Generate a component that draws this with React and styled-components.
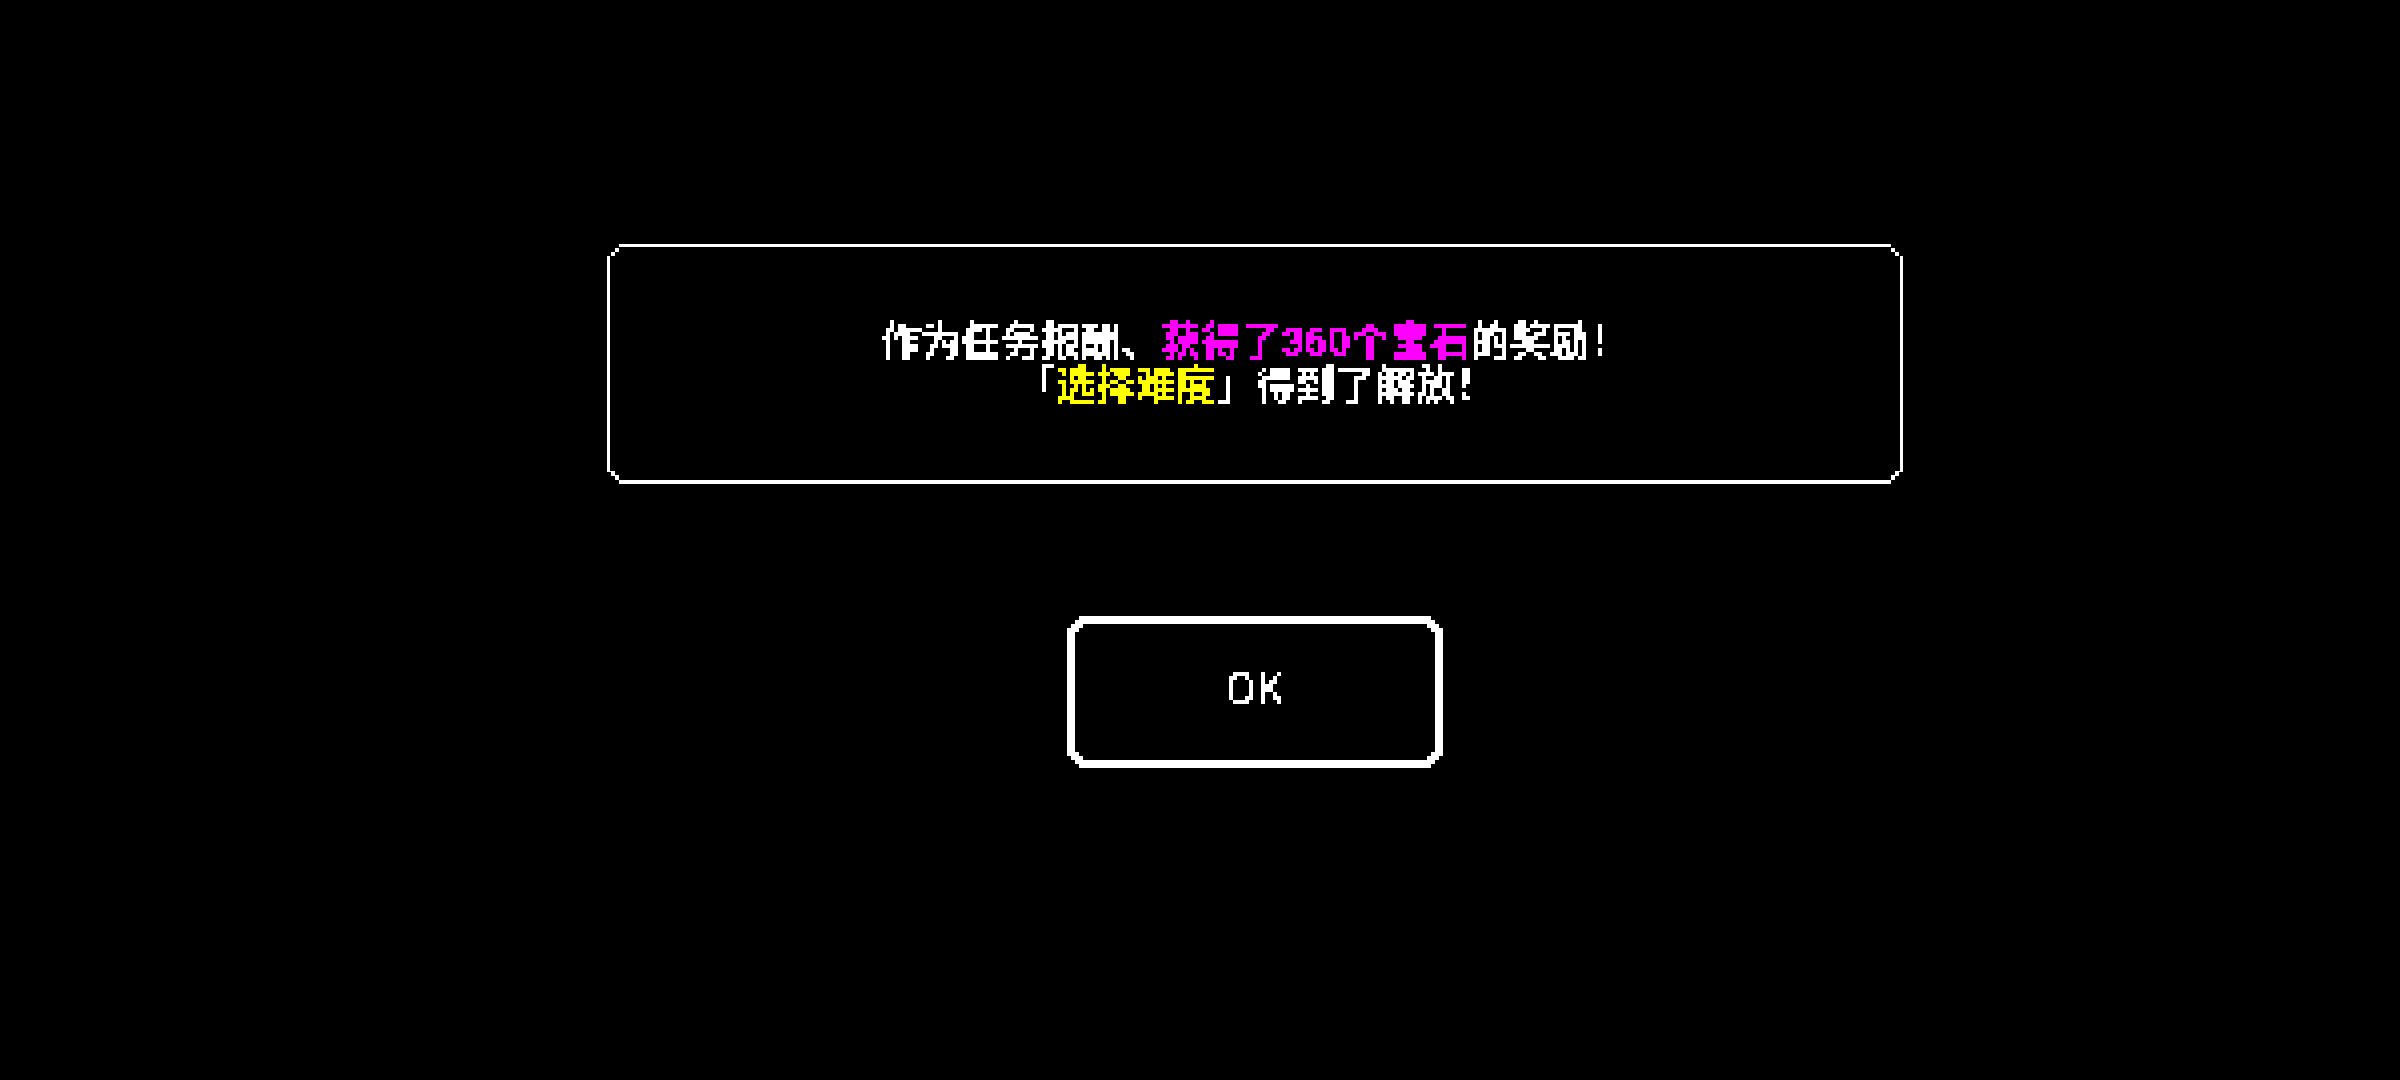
import React from "react";
import styled, { createGlobalStyle } from "styled-components";

const GlobalStyle = createGlobalStyle`
  *, *::before, *::after { box-sizing: border-box; }
  html, body { margin: 0; background: #000; }
`;

/* Corners cut in square steps, like an 8-bit window frame. */
const stepped = (n, s, extra = 0) => {
  const at = (i) => (i > 0 ? i * s + extra : 0);
  const pts = [];
  for (let i = n; i > 0; i--) {
    pts.push([at(i), at(n - i)]);
    pts.push([at(i), at(n - i + 1)]);
  }
  pts.push([0, at(n)]);
  const far = (v) => `calc(100% - ${v}px)`;
  const near = (v) => `${v}px`;
  const corner = (list, fx, fy) => list.map(([x, y]) => `${fx(x)} ${fy(y)}`);
  const back = [...pts].reverse();
  return `polygon(${[
    ...corner(pts, near, near),
    ...corner(back, near, far),
    ...corner(pts, far, far),
    ...corner(back, far, near),
  ].join(", ")})`;
};

const Screen = styled.main`
  min-height: 100vh;
  padding: 244px 0 64px 110px;
  display: flex;
  flex-direction: column;
  align-items: center;
  gap: 132px;
  background: #000;
  color: #fff;
  font-family: Roboto, "Noto Sans CJK SC", sans-serif;
`;

const Panel = styled.section`
  width: 100%;
  max-width: 1296px;
  padding: 3px 3px 4px;
  background: #fff;
  clip-path: ${stepped(3, 4)};
`;

const PanelBody = styled.div`
  padding: 73px 24px 72px;
  background: #000;
  clip-path: ${stepped(2, 4, 1)};
`;

const Message = styled.p`
  margin: 0;
  font-size: 40px;
  font-weight: 700;
  line-height: 44px;
  text-align: center;
  filter: url(#pixels);
`;

const Line = styled.span`
  display: block;
`;

const Mark = styled.span`
  color: ${(p) => p.$color};
`;

const OkButton = styled.button`
  width: 376px;
  padding: 8px;
  border: 0;
  background: #fff;
  color: #fff;
  font-family: "Liberation Mono", monospace;
  cursor: pointer;
  clip-path: ${stepped(3, 4)};
`;

const OkFace = styled.span`
  display: flex;
  align-items: center;
  justify-content: center;
  height: 136px;
  background: #000;
  clip-path: ${stepped(2, 4)};
`;

const OkLabel = styled.span`
  font-size: 50px;
  line-height: 56px;
  filter: url(#pixels);
`;

const Defs = styled.svg`
  position: absolute;
  width: 0;
  height: 0;
`;

/* Samples one point per 4px cell and grows it to fill the cell. */
const PixelFilter = () => (
  <Defs aria-hidden="true">
    <filter id="pixels" x="0" y="0" width="100%" height="100%" colorInterpolationFilters="sRGB">
      <feFlood x="1" y="1" width="1" height="1" floodColor="#fff" />
      <feComposite x="0" y="0" width="4" height="4" />
      <feTile result="grid" />
      <feComposite in="SourceGraphic" in2="grid" operator="in" result="dots" />
      <feOffset in="dots" dx="1" dy="0" result="right" />
      <feMerge result="pair">
        <feMergeNode in="dots" />
        <feMergeNode in="right" />
      </feMerge>
      <feOffset in="pair" dx="0" dy="1" result="below" />
      <feMerge>
        <feMergeNode in="pair" />
        <feMergeNode in="below" />
      </feMerge>
      <feMorphology operator="dilate" radius="1" />
      <feComponentTransfer>
        <feFuncA type="discrete" tableValues="0 0 1 1 1" />
      </feComponentTransfer>
    </filter>
  </Defs>
);

export default function App() {
  return (
    <>
      <GlobalStyle />
      <PixelFilter />
      <Screen lang="zh-CN">
        <Panel>
          <PanelBody>
            <Message>
              <Line>
                作为任务报酬、<Mark $color="#f0f">获得了360个宝石</Mark>的奖励！
              </Line>
              <Line>
                「<Mark $color="#ff0">选择难度</Mark>」得到了解放！
              </Line>
            </Message>
          </PanelBody>
        </Panel>
        <OkButton type="button">
          <OkFace>
            <OkLabel>OK</OkLabel>
          </OkFace>
        </OkButton>
      </Screen>
    </>
  );
}
